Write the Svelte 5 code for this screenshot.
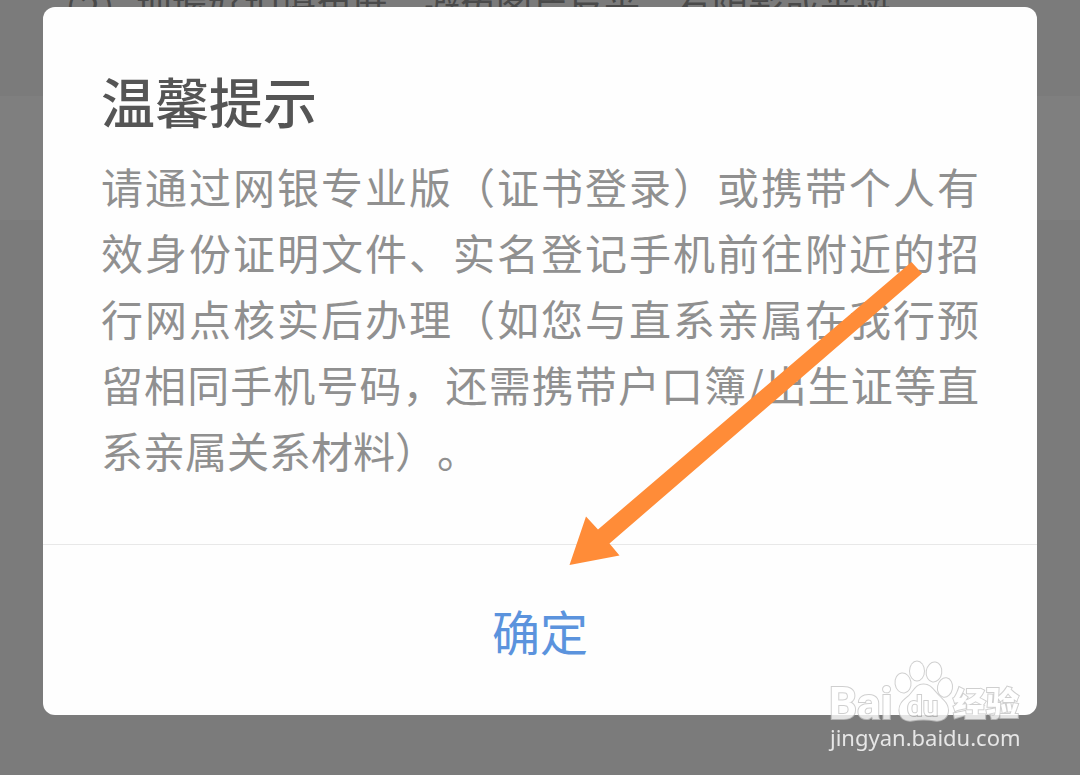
<script lang="ts">
  let open = $state(true);

  const tip = '（2）把握好拍摄角度，避免图片反光，有阴影或光斑';
  const message =
    '请通过网银专业版（证书登录）或携带个人有效身份证明文件、实名登记手机前往附近的招行网点核实后办理（如您与直系亲属在我行预留相同手机号码，还需携带户口簿/出生证等直系亲属关系材料）。';
</script>

<main class="page">
  <p class="tip">{tip}</p>
  <div class="panel"></div>
</main>

{#if open}
  <div class="overlay">
    <div class="dialog" role="dialog" aria-modal="true" aria-labelledby="dialog-title">
      <div class="content">
        <h1 id="dialog-title">温馨提示</h1>
        <p class="message">{message}</p>
      </div>
      <button type="button" class="confirm" onclick={() => (open = false)}>确定</button>

      <svg class="arrow" viewBox="0 0 354 306" width="354" height="306" aria-hidden="true">
        <path d="M0.5 305 17 256.500 29 269.500 342.500 2 353 13.500 40.500 283.500 50.500 295.500Z" fill="#ff8c38" />
      </svg>
    </div>
  </div>
{/if}

<div class="watermark">
  <svg viewBox="0 0 200 62" width="200" height="62" aria-hidden="true">
    <g class="logo">
      <text class="latin" x="1" y="59" font-size="44">Bai</text>
      <ellipse cx="75" cy="23" rx="7.500" ry="9.500" transform="rotate(-8 75 23)" />
      <ellipse cx="89" cy="11" rx="7" ry="9.500" />
      <ellipse cx="106" cy="12" rx="7.300" ry="9.500" transform="rotate(8 106 12)" />
      <ellipse cx="117" cy="27.500" rx="7" ry="9.300" transform="rotate(10 117 27.500)" />
      <path d="M95.500 24.500C88 24.500 86 31 81 36C75 41 71 44 71.500 51C72 58 77 61.500 84 60.500C92 59 99 59 107 60.500C114 61.500 119.500 58 120 51C120.500 44 115 40 110 35C105 30 103 24.500 95.500 24.500Z" />
      <text class="latin thin" x="79" y="55.500" font-size="28">du</text>
      <text class="cjk" x="125" y="56" font-size="33">经验</text>
    </g>
  </svg>
  <span>jingyan.baidu.com</span>
</div>

<style>
  :global(body) {
    background: #f7f7f7;
    font-family: 'Noto Sans CJK SC', 'Noto Sans', sans-serif;
    text-spacing-trim: space-all;
    overflow: hidden;
  }

  h1,
  p {
    margin: 0;
  }

  .page {
    min-height: 100vh;
    display: flow-root;
  }

  .tip {
    margin-top: -12px;
    padding: 0 44px;
    font-size: 36px;
    line-height: 36px;
    color: #949494;
    white-space: nowrap;
  }

  .panel {
    height: 124px;
    margin-top: 72px;
    background: #ffffff;
  }

  .overlay {
    position: fixed;
    inset: 0;
    box-sizing: border-box;
    display: flex;
    flex-direction: column;
    justify-content: center;
    padding: 0 43px 53px;
    background: rgba(0, 0, 0, 0.5);
  }

  .dialog {
    position: relative;
    display: flex;
    flex-direction: column;
    border-radius: 12px;
    background: #fefefe;
  }

  .content {
    padding: 62px 58px 61px;
  }

  h1 {
    font-size: 54px;
    line-height: 64px;
    font-weight: 500;
    color: #555555;
  }

  .message {
    margin-top: 20px;
    font-size: 42px;
    line-height: 66px;
    color: #909090;
    text-align: justify;
  }

  .confirm {
    padding: 53px 0;
    border: 0;
    border-top: 1px solid #e8e8e8;
    border-radius: 0 0 12px 12px;
    background: transparent;
    font-family: inherit;
    font-size: 48px;
    line-height: 64px;
    color: #5b93dd;
    cursor: pointer;
  }

  .arrow {
    position: absolute;
    right: 114px;
    bottom: 149px;
    pointer-events: none;
  }

  .watermark {
    position: fixed;
    right: 52px;
    bottom: 23px;
    display: flex;
    flex-direction: column;
    width: 200px;
    pointer-events: none;
  }

  .watermark span {
    padding-left: 2px;
    font-family: 'Noto Sans', sans-serif;
    font-size: 22px;
    line-height: 30px;
    color: #e6e6e6;
  }

  .logo {
    fill: #ffffff;
    stroke: #c4c4c4;
    stroke-width: 2px;
    paint-order: stroke;
    opacity: 0.8;
  }

  .latin {
    font-family: Roboto, sans-serif;
    font-weight: 700;
  }

  .thin {
    font-weight: 500;
  }

  .cjk {
    font-family: 'Noto Sans CJK SC', sans-serif;
    font-weight: 900;
  }
</style>
